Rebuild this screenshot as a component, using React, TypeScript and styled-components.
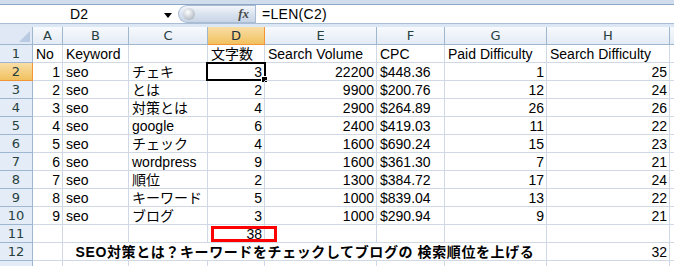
import styled, { createGlobalStyle } from "styled-components";

const GlobalStyle = createGlobalStyle`
  html, body {
    margin: 0;
    padding: 0;
    background: #ffffff;
    overflow: hidden;
  }
  * {
    box-sizing: border-box;
  }
`;

const Page = styled.div`
  width: 674px;
  height: 266px;
  overflow: hidden;
  font-family: "Liberation Sans", "Noto Sans CJK JP", sans-serif;
  font-size: 14px;
  color: #000;
`;

const FormulaArea = styled.div`
  height: 27px;
  background: linear-gradient(#cfdcec, #dde8f5);
  padding-top: 4px;
`;

const FormulaRow = styled.div`
  display: flex;
  height: 20px;
  background: #fff;
  border-top: 1px solid #8ea7c6;
  border-bottom: 1px solid #a9bdd5;
`;

const NameBox = styled.div`
  width: 158px;
  display: flex;
  align-items: center;
  justify-content: center;
  line-height: 18px;
`;

const DropArrow = styled.div`
  width: 20px;
  display: flex;
  align-items: center;
  justify-content: center;
  &::after {
    content: "";
    border-left: 4px solid transparent;
    border-right: 4px solid transparent;
    border-top: 5px solid #000;
    margin-top: 2px;
  }
`;

const FxButton = styled.div`
  width: 77px;
  display: flex;
  align-items: center;
  justify-content: space-between;
  padding: 0 6px 0 4px;
  border-radius: 10px 0 0 10px;
  background: linear-gradient(#f4f7fb, #d7e1ee 55%, #c8d5e6);
  border: 1px solid #a9bcd3;
  border-right: none;
`;

const Knob = styled.span`
  width: 12px;
  height: 12px;
  border-radius: 50%;
  background: radial-gradient(circle at 40% 35%, #fff, #c2c8d0 60%, #9aa3ae);
`;

const FxLabel = styled.span`
  font-family: "Liberation Serif", serif;
  font-style: italic;
  font-weight: bold;
  font-size: 13px;
  color: #4a4a4a;
`;

const FormulaInput = styled.div`
  flex: 1;
  border-left: 1px solid #a9bcd3;
  padding-left: 6px;
  line-height: 18px;
  letter-spacing: 0.3px;
`;

const Sheet = styled.div`
  display: grid;
  grid-template-columns: 33px 30px 66px 79px 57px 112px 68px 102px 123px 1fr;
  grid-auto-rows: 18px;
`;

const Corner = styled.div`
  position: relative;
  background: #dfe8f4;
  border-right: 1px solid #9eb6ce;
  border-bottom: 1px solid #9eb6ce;
  &::after {
    content: "";
    position: absolute;
    right: 2px;
    bottom: 2px;
    border-left: 11px solid transparent;
    border-bottom: 11px solid #b8cbe3;
  }
`;

const ColHead = styled.div<{ $active?: boolean }>`
  display: flex;
  align-items: center;
  justify-content: center;
  font-family: "DejaVu Sans", sans-serif;
  font-size: 13px;
  color: ${(p) => (p.$active ? "#1e3040" : "#27413e")};
  background: ${(p) =>
    p.$active
      ? "linear-gradient(#f9dea7, #f1c15f)"
      : "linear-gradient(#f7fafd, #e4ebf5)"};
  border-right: 1px solid ${(p) => (p.$active ? "#f29536" : "#9eb6ce")};
  border-bottom: 1px solid ${(p) => (p.$active ? "#f29536" : "#9eb6ce")};
`;

const RowHead = styled.div<{ $active?: boolean }>`
  display: flex;
  align-items: center;
  justify-content: center;
  font-family: "DejaVu Sans", sans-serif;
  font-size: 13px;
  color: #27413e;
  background: ${(p) =>
    p.$active ? "linear-gradient(#f9dea7, #f1c15f)" : "#e4ecf7"};
  border-right: 1px solid ${(p) => (p.$active ? "#f29536" : "#9eb6ce")};
  border-bottom: 1px solid ${(p) => (p.$active ? "#f29536" : "#9eb6ce")};
`;

const Cell = styled.div<{ $right?: boolean; $span?: number; $center?: boolean; $bold?: boolean }>`
  position: relative;
  grid-column: ${(p) => (p.$span ? `span ${p.$span}` : "auto")};
  border-right: 1px solid #d0d7e5;
  border-bottom: 1px solid #d0d7e5;
  line-height: 18px;
  white-space: nowrap;
  overflow: visible;
  padding: 0 2px 0 3px;
  text-align: ${(p) => (p.$right ? "right" : p.$center ? "center" : "left")};
  font-weight: ${(p) => (p.$bold ? "bold" : "normal")};
  letter-spacing: ${(p) => (p.$bold ? "0.6px" : "0")};
`;

const ActiveFrame = styled.div`
  position: absolute;
  left: -2px;
  top: -1px;
  right: -2px;
  bottom: -1px;
  border: 2px solid #000;
  pointer-events: none;
  &::after {
    content: "";
    position: absolute;
    right: -4px;
    bottom: -4px;
    width: 5px;
    height: 5px;
    background: #000;
    border: 1px solid #fff;
  }
`;

const RedMark = styled.div`
  position: absolute;
  left: 3px;
  top: 1px;
  width: 66px;
  height: 16px;
  border: 3px solid #f00;
  pointer-events: none;
`;

type Row = [string, string, string, string, string, string, string, string];

const rows: Row[] = [
  ["1", "seo", "チェキ", "3", "22200", "$448.36", "1", "25"],
  ["2", "seo", "とは", "2", "9900", "$200.76", "12", "24"],
  ["3", "seo", "対策とは", "4", "2900", "$264.89", "26", "26"],
  ["4", "seo", "google", "6", "2400", "$419.03", "11", "22"],
  ["5", "seo", "チェック", "4", "1600", "$690.24", "15", "23"],
  ["6", "seo", "wordpress", "9", "1600", "$361.30", "7", "21"],
  ["7", "seo", "順位", "2", "1300", "$384.72", "17", "24"],
  ["8", "seo", "キーワード", "5", "1000", "$839.04", "13", "22"],
  ["9", "seo", "ブログ", "3", "1000", "$290.94", "9", "21"],
];

const cols = ["A", "B", "C", "D", "E", "F", "G", "H", ""];

const Blank = () => (
  <>
    {Array.from({ length: 9 }).map((_, i) => (
      <Cell key={i} />
    ))}
  </>
);

export default function App() {
  return (
    <Page>
      <GlobalStyle />
      <FormulaArea>
        <FormulaRow>
          <NameBox>D2</NameBox>
          <DropArrow />
          <FxButton>
            <Knob />
            <FxLabel>fx</FxLabel>
          </FxButton>
          <FormulaInput>=LEN(C2)</FormulaInput>
        </FormulaRow>
      </FormulaArea>

      <Sheet>
        <Corner />
        {cols.map((c, i) => (
          <ColHead key={i} $active={c === "D"}>
            {c}
          </ColHead>
        ))}

        <RowHead>1</RowHead>
        <Cell>No</Cell>
        <Cell>Keyword</Cell>
        <Cell />
        <Cell>文字数</Cell>
        <Cell>Search Volume</Cell>
        <Cell>CPC</Cell>
        <Cell>Paid Difficulty</Cell>
        <Cell>Search Difficulty</Cell>
        <Cell />

        {rows.map((r, i) => (
          <>
            <RowHead key={`h${i}`} $active={i === 0}>
              {i + 2}
            </RowHead>
            <Cell $right>{r[0]}</Cell>
            <Cell>{r[1]}</Cell>
            <Cell>{r[2]}</Cell>
            <Cell $right>
              {r[3]}
              {i === 0 && <ActiveFrame />}
            </Cell>
            <Cell $right>{r[4]}</Cell>
            <Cell>{r[5]}</Cell>
            <Cell $right>{r[6]}</Cell>
            <Cell $right>{r[7]}</Cell>
            <Cell />
          </>
        ))}

        <RowHead>11</RowHead>
        <Cell />
        <Cell />
        <Cell />
        <Cell $right>
          38
          <RedMark />
        </Cell>
        <Cell />
        <Cell />
        <Cell />
        <Cell />
        <Cell />

        <RowHead>12</RowHead>
        <Cell />
        <Cell $span={6} $center $bold>
          SEO対策とは？キーワードをチェックしてブログの 検索順位を上げる
        </Cell>
        <Cell $right>32</Cell>
        <Cell />

        <RowHead />
        <Blank />
      </Sheet>
    </Page>
  );
}
